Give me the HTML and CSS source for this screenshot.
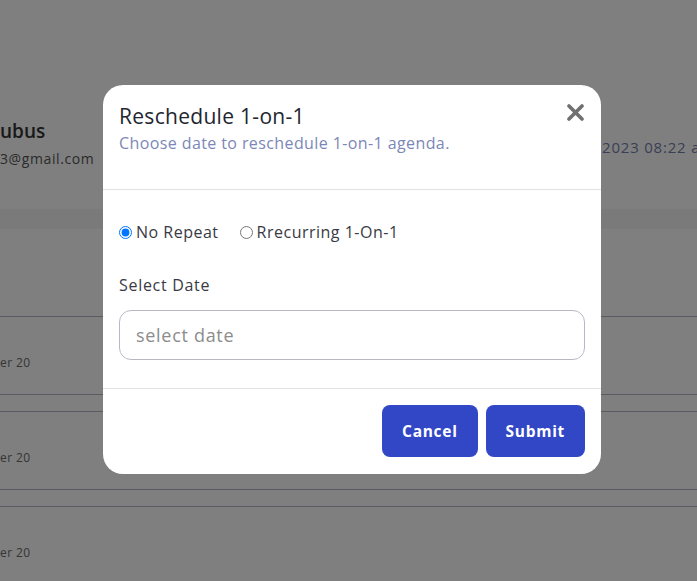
FILE: index.html
```html
<!DOCTYPE html>
<html lang="en">
<head>
<meta charset="utf-8">
<title>Reschedule 1-on-1</title>
<link rel="stylesheet" href="styles.css">
</head>
<body>
<div class="page">
  <div class="profile">
    <div class="who">
      <div class="name">ubus</div>
      <div class="email">3@gmail.com</div>
    </div>
    <div class="stamp">2023 08:22 am</div>
  </div>
  <div class="band"></div>
  <div class="table">
    <div class="row"><span>er 20</span></div>
    <div class="row"><span>er 20</span></div>
    <div class="row"><span>er 20</span></div>
  </div>
</div>

<div class="overlay">
  <div class="modal">
    <div class="modal-head">
      <div class="head-text">
        <h2 class="title">Reschedule 1-on-1</h2>
        <p class="subtitle">Choose date to reschedule 1-on-1 agenda.</p>
      </div>
      <button class="close" aria-label="Close">
        <svg width="17" height="17" viewBox="0 0 17 17"><path d="M2 2 L15 15 M15 2 L2 15" stroke="#707070" stroke-width="3.6" stroke-linecap="round"/></svg>
      </button>
    </div>
    <div class="modal-body">
      <div class="radios">
        <label class="radio"><input type="radio" name="rep" checked> No Repeat</label>
        <label class="radio"><input type="radio" name="rep"> Rrecurring 1-On-1</label>
      </div>
      <label class="field-label">Select Date</label>
      <input class="date" type="text" placeholder="select date">
    </div>
    <div class="modal-foot">
      <button class="btn">Cancel</button>
      <button class="btn">Submit</button>
    </div>
  </div>
</div>
</body>
</html>
```

FILE: styles.css
```css
* { box-sizing: border-box; }
html, body { margin: 0; padding: 0; }
body {
  width: 697px;
  height: 581px;
  overflow: hidden;
  font-family: "Open Sans", "DejaVu Sans", sans-serif;
  background: #ffffff;
  position: relative;
}
.page { width: 697px; }
.profile {
  display: flex;
  padding-top: 119px;
  height: 209px;
}
.who { width: 602px; flex-shrink: 0; }
.name { font-size: 19px; font-weight: 600; color: #333; line-height: 24px; }
.email { font-size: 14px; color: #555; line-height: 20px; margin-top: 6px; letter-spacing: 0.6px; }
.stamp {
  font-size: 15px;
  color: #747eaa;
  white-space: nowrap;
  margin-top: 18px;
  letter-spacing: 0.8px;
}
.band { height: 20px; background: #f4f4f4; }
.table { padding-top: 87px; }
.row {
  height: 79px;
  border-top: 1px solid #b4b4c6;
  border-bottom: 1px solid #b4b4c6;
  margin-bottom: 16px;
  display: flex;
  align-items: center;
  padding-top: 14px;
  font-size: 12px;
  color: #6a6a6a;
  letter-spacing: 0.4px;
}
.overlay {
  position: absolute;
  inset: 0;
  background: rgba(0, 0, 0, 0.5);
  display: flex;
  justify-content: center;
  align-items: flex-start;
  padding: 85px 0 0 7px;
}
.modal {
  width: 498px;
  background: #fff;
  border-radius: 20px;
  overflow: hidden;
}
.modal-head {
  display: flex;
  justify-content: space-between;
  align-items: flex-start;
  padding: 19px 17px 37px 16px;
  border-bottom: 1px solid #e2e2e6;
}
.title {
  margin: 0;
  font-size: 21px;
  font-weight: 500;
  line-height: 24px;
  color: #22262f;
  letter-spacing: 0.3px;
}
.subtitle {
  margin: 6px 0 0;
  font-size: 16px;
  line-height: 18px;
  color: #7c87b8;
  letter-spacing: 0.4px;
}
.close {
  border: 0;
  background: none;
  padding: 0;
  margin-top: 0;
  width: 17px;
  height: 17px;
  display: block;
  cursor: pointer;
}
.close svg { display: block; }
.modal-body {
  padding: 34px 16px 28px;
  border-bottom: 1px solid #e2e2e6;
  display: flex;
  flex-direction: column;
}
.radios { display: flex; gap: 21px; height: 16px; align-items: center; }
.radio {
  display: flex;
  align-items: center;
  font-size: 16px;
  color: #3a3a44;
  letter-spacing: 0.5px;
  white-space: nowrap;
}
.radio input { margin: 0 4px 0 0; width: 13px; height: 13px; accent-color: #0075ff; }
.field-label {
  margin-top: 36px;
  font-size: 16px;
  line-height: 18px;
  color: #3a3a44;
  letter-spacing: 0.7px;
}
.date {
  margin-top: 16px;
  height: 50px;
  width: 100%;
  border: 1px solid #b8b8c4;
  border-radius: 12px;
  padding: 0 16px;
  font-family: inherit;
  font-size: 18px;
  letter-spacing: 0.7px;
  color: #333;
  outline: none;
}
.date::placeholder { color: #8c8c8c; }
.modal-foot {
  display: flex;
  justify-content: flex-end;
  gap: 8px;
  padding: 16px 16px 17px;
}
.btn {
  height: 52px;
  padding: 0 20px;
  border: 0;
  border-radius: 8px;
  background: #3247c6;
  color: #fff;
  font-family: inherit;
  font-size: 15.5px;
  font-weight: 700;
  letter-spacing: 0.7px;
  cursor: pointer;
}
```
